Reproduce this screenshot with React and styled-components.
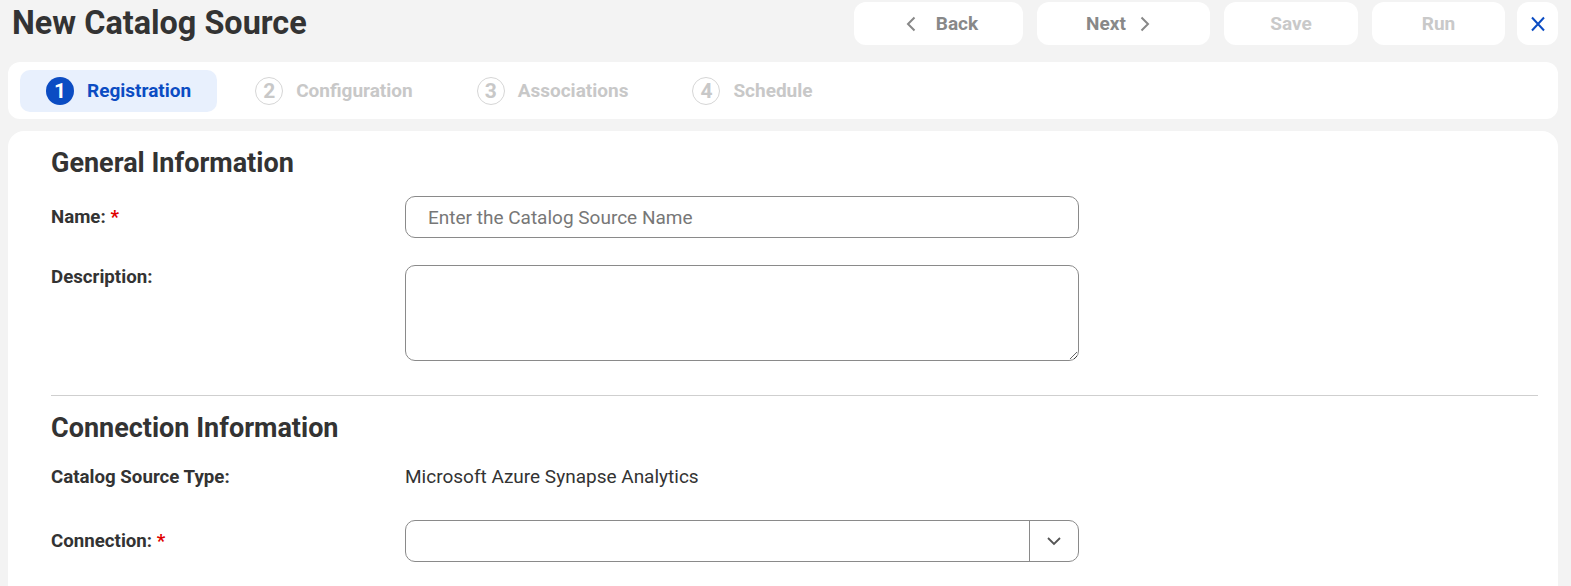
import styled, { createGlobalStyle } from "styled-components";

const GlobalStyle = createGlobalStyle`
  body {
    margin: 0;
    background: #f3f3f3;
    font-family: Roboto, "Liberation Sans", sans-serif;
    color: #333;
  }
`;

const steps = ["Registration", "Configuration", "Associations", "Schedule"];

function ChevronLeft() {
  return (
    <svg width="12" height="16" viewBox="0 0 12 16">
      <path d="M9.5 1.5 L3 8 L9.5 14.5" fill="none" stroke="currentColor" strokeWidth="2" />
    </svg>
  );
}

function ChevronRight() {
  return (
    <svg width="12" height="16" viewBox="0 0 12 16">
      <path d="M2.5 1.5 L9 8 L2.5 14.5" fill="none" stroke="currentColor" strokeWidth="2" />
    </svg>
  );
}

export default function App() {
  return (
    <Page>
      <GlobalStyle />
      <Header>
        <Title>New Catalog Source</Title>
        <Actions>
          <ActionButton $w={169} $gap={19} $shift={6}>
            <ChevronLeft />
            Back
          </ActionButton>
          <ActionButton $w={173} $gap={13} $shift={-10}>
            Next
            <ChevronRight />
          </ActionButton>
          <ActionButton $w={134} $disabled>Save</ActionButton>
          <ActionButton $w={133} $disabled>Run</ActionButton>
          <CloseButton>
            <svg width="16" height="16" viewBox="0 0 16 16">
              <path d="M2 1.5 L14 14.5 M14 1.5 L2 14.5" stroke="#0b4cc3" strokeWidth="2" />
            </svg>
          </CloseButton>
        </Actions>
      </Header>

      <Stepper>
        {steps.map((s, i) => (
          <Step key={s} $active={i === 0}>
            <StepNum $active={i === 0}>{i + 1}</StepNum>
            {s}
          </Step>
        ))}
      </Stepper>

      <FormCard>
        <SectionTitle>General Information</SectionTitle>
        <Row $gap={18}>
          <Label>Name: <Req>*</Req></Label>
          <TextInput placeholder="Enter the Catalog Source Name" />
        </Row>
        <Row $gap={27} $top>
          <Label $pad={1}>Description:</Label>
          <TextArea />
        </Row>
        <Divider />
        <SectionTitle $top={17}>Connection Information</SectionTitle>
        <Row $gap={23}>
          <Label>Catalog Source Type:</Label>
          <Value>Microsoft Azure Synapse Analytics</Value>
        </Row>
        <Row $gap={32}>
          <Label>Connection: <Req>*</Req></Label>
          <Select>
            <SelectValue />
            <SelectToggle>
              <svg width="16" height="16" viewBox="0 0 16 16">
                <path d="M2 5 L8 11 L14 5" fill="none" stroke="#555" strokeWidth="1.8" />
              </svg>
            </SelectToggle>
          </Select>
        </Row>
      </FormCard>
    </Page>
  );
}

const Page = styled.div`
  padding: 0 13px 0 8px;
  height: 586px;
  overflow: hidden;
  box-sizing: border-box;
`;

const Header = styled.div`
  display: flex;
  justify-content: space-between;
  align-items: flex-start;
  height: 62px;
`;

const Title = styled.h1`
  margin: 3px 0 0 4px;
  font-size: 32.4px;
  font-weight: 700;
  color: #333;
  line-height: 40px;
`;

const Actions = styled.div`
  display: flex;
  gap: 14px;
  padding-top: 2px;
`;

const ActionButton = styled.div`
  width: ${(p) => p.$w}px;
  height: 43px;
  box-sizing: border-box;
  padding-left: ${(p) => Math.max(p.$shift || 0, 0)}px;
  padding-right: ${(p) => Math.max(-(p.$shift || 0), 0)}px;
  background: #fff;
  border-radius: 12px;
  display: flex;
  align-items: center;
  justify-content: center;
  gap: ${(p) => p.$gap || 0}px;
  font-size: 19px;
  font-weight: 700;
  color: ${(p) => (p.$disabled ? "#c9c9c9" : "#888")};
`;

const CloseButton = styled.div`
  width: 41px;
  height: 43px;
  margin-left: -2px;
  background: #fff;
  border-radius: 12px;
  display: flex;
  align-items: center;
  justify-content: center;
`;

const Stepper = styled.div`
  background: #fff;
  border-radius: 12px;
  height: 57px;
  display: flex;
  align-items: center;
  padding: 0 12px;
  gap: 12px;
`;

const Step = styled.div`
  display: flex;
  align-items: center;
  gap: 13px;
  height: 42px;
  padding: 0 26px;
  border-radius: 10px;
  background: ${(p) => (p.$active ? "#e8f0fd" : "transparent")};
  color: ${(p) => (p.$active ? "#0b4cc3" : "#c8c8c8")};
  font-size: 19px;
  font-weight: 700;
`;

const StepNum = styled.span`
  width: 28px;
  height: 28px;
  border-radius: 50%;
  box-sizing: border-box;
  display: flex;
  align-items: center;
  justify-content: center;
  font-size: 21px;
  font-weight: 700;
  background: ${(p) => (p.$active ? "#0b4cc3" : "#fff")};
  color: ${(p) => (p.$active ? "#fff" : "#c8c8c8")};
  border: ${(p) => (p.$active ? "none" : "1.5px solid #d6d6d6")};
`;

const FormCard = styled.div`
  margin-top: 12px;
  background: #fff;
  border-radius: 16px 16px 0 0;
  padding: 17px 20px 40px 43px;
  height: 460px;
`;

const SectionTitle = styled.h2`
  margin: ${(p) => p.$top || 0}px 0 0;
  font-size: 27px;
  font-weight: 700;
  line-height: 30px;
  color: #333;
`;

const Row = styled.div`
  display: grid;
  grid-template-columns: 354px 674px;
  align-items: ${(p) => (p.$top ? "start" : "center")};
  margin-top: ${(p) => p.$gap || 19}px;
`;

const Label = styled.div`
  font-size: 18.7px;
  line-height: 22px;
  font-weight: 700;
  color: #333;
  padding-top: ${(p) => p.$pad || 0}px;
`;

const Req = styled.span`
  color: #e00000;
`;

const TextInput = styled.input`
  height: 42px;
  box-sizing: border-box;
  border: 1px solid #8a8a8a;
  border-radius: 10px;
  padding: 0 22px;
  font-family: Roboto, "Liberation Sans", sans-serif;
  font-size: 19px;
  color: #333;
  outline: none;
  &::placeholder {
    color: #777;
  }
`;

const TextArea = styled.textarea`
  height: 96px;
  box-sizing: border-box;
  border: 1px solid #8a8a8a;
  border-radius: 10px;
  resize: vertical;
  font-family: Roboto, "Liberation Sans", sans-serif;
  outline: none;
`;

const Divider = styled.hr`
  border: none;
  border-top: 1px solid #cfcfcf;
  margin: 34px 0 0;
`;

const Value = styled.div`
  font-size: 19px;
  line-height: 22px;
  color: #333;
`;

const Select = styled.div`
  height: 42px;
  box-sizing: border-box;
  border: 1px solid #8a8a8a;
  border-radius: 10px;
  display: flex;
`;

const SelectValue = styled.div`
  flex: 1;
`;

const SelectToggle = styled.div`
  width: 48px;
  border-left: 1px solid #8a8a8a;
  display: flex;
  align-items: center;
  justify-content: center;
`;
